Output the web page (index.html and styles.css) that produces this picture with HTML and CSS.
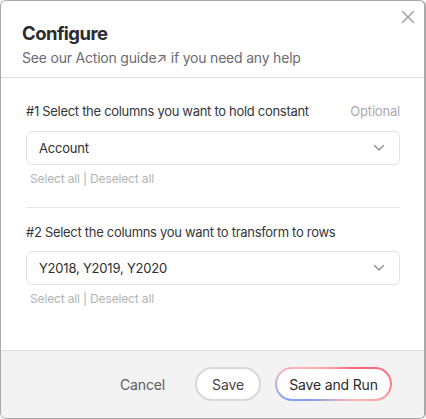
FILE: index.html
```html
<!DOCTYPE html>
<html>
<head>
<meta charset="utf-8">
<link rel="stylesheet" href="styles.css">
</head>
<body>
<div class="dialog">
  <button class="close" aria-label="Close">
    <svg width="14" height="14" viewBox="0 0 14 14"><path d="M1.5 1.5L12.5 12.5M12.5 1.5L1.5 12.5" stroke="#9a9a9e" stroke-width="1.4" stroke-linecap="round"/></svg>
  </button>
  <header class="header">
    <h1 class="title">Configure</h1>
    <p class="subtitle">See our <span class="link">Action guide↗</span> if you need any help</p>
  </header>
  <main class="body">
    <section class="section">
      <div class="label-row">
        <span class="label">#1 Select the columns you want to hold constant</span>
        <span class="optional">Optional</span>
      </div>
      <div class="select">
        <span>Account</span>
        <svg class="chev" width="12" height="8" viewBox="0 0 12 8"><path d="M1.5 1.5L6 6L10.5 1.5" fill="none" stroke="#8e8e93" stroke-width="1.4" stroke-linecap="round" stroke-linejoin="round"/></svg>
      </div>
      <div class="select-links">Select all | Deselect all</div>
    </section>
    <div class="divider"></div>
    <section class="section second">
      <div class="label-row">
        <span class="label">#2 Select the columns you want to transform to rows</span>
      </div>
      <div class="select">
        <span>Y2018, Y2019, Y2020</span>
        <svg class="chev" width="12" height="8" viewBox="0 0 12 8"><path d="M1.5 1.5L6 6L10.5 1.5" fill="none" stroke="#8e8e93" stroke-width="1.4" stroke-linecap="round" stroke-linejoin="round"/></svg>
      </div>
      <div class="select-links">Select all | Deselect all</div>
    </section>
  </main>
  <footer class="footer">
    <button class="btn cancel">Cancel</button>
    <button class="btn save">Save</button>
    <button class="btn run">Save and Run</button>
  </footer>
</div>
</body>
</html>
```

FILE: styles.css
```css
* { box-sizing: border-box; }
html, body { margin: 0; padding: 0; background: #ffffff; }
body { font-family: Inter, "Noto Sans", "Liberation Sans", sans-serif; color: #333; }

.dialog {
  position: relative;
  width: 426px;
  height: 419px;
  border: 1px solid #a9a9a9;
  border-right-width: 2px;
  border-radius: 6px;
  background: #fff;
  display: flex;
  flex-direction: column;
  overflow: hidden;
}

.close {
  position: absolute;
  top: 9px;
  right: 9px;
  width: 14px;
  height: 14px;
  padding: 0;
  border: 0;
  background: none;
  display: flex;
}

.header {
  padding: 19px 22px 9px 21px;
  border-bottom: 1px solid #dcdce0;
}
.title {
  margin: 0;
  font-size: 18.5px;
  line-height: 26px;
  font-weight: 700;
  color: #2b2b30;
  letter-spacing: -0.55px;
}
.subtitle {
  margin: 2px 0 0;
  font-size: 14px;
  line-height: 20px;
  color: #6b6b70;
  letter-spacing: -0.2px;
}

.body {
  flex: 1;
  padding: 24px 24px 0 25px;
}
.label-row {
  display: flex;
  justify-content: space-between;
  align-items: center;
  height: 18px;
}
.label {
  font-size: 13px;
  color: #36363a;
  letter-spacing: -0.3px;
}
.optional {
  font-size: 13px;
  color: #a9a9ad;
  letter-spacing: -0.2px;
}
.select {
  margin-top: 11px;
  height: 34px;
  border: 1px solid #e2e2e6;
  border-radius: 6px;
  display: flex;
  align-items: center;
  justify-content: space-between;
  padding: 0 14px 0 12px;
  font-size: 13px;
  color: #2e2e32;
  letter-spacing: -0.2px;
}
.second .select { margin-top: 10px; }
.chev { display: block; }
.select-links {
  margin-top: 6px;
  padding-left: 4px;
  font-size: 12px;
  line-height: 16px;
  color: #b3b3b7;
  letter-spacing: -0.15px;
}
.divider {
  height: 1px;
  background: #e4e4e8;
  margin: 20px 0 15px;
}

.footer {
  height: 68px;
  background: #f3f3f3;
  border-top: 1px solid #dedee2;
  display: flex;
  align-items: center;
  justify-content: flex-end;
  padding: 0 32px 1px 0;
  gap: 14px;
}
.btn {
  font-family: inherit;
  font-size: 14px;
  height: 34px;
  border-radius: 17px;
  cursor: pointer;
  letter-spacing: -0.15px;
}
.cancel {
  border: 0;
  background: none;
  color: #5a5a60;
  padding: 0 16px;
}
.save {
  width: 66px;
  border: 2px solid #d7d7dc;
  background: #fff;
  color: #46464c;
}
.run {
  width: 117px;
  border: 2px solid transparent;
  color: #2b2b30;
  background:
    linear-gradient(#fff, #fff) padding-box,
    conic-gradient(from 0deg, #ff9aa6 0deg, #ff5e7a 60deg, #ff7b8c 90deg, #ffb5ad 118deg, #d8aac8 180deg, #7d9ff2 242deg, #8fa6ee 258deg, #f2b2bf 282deg, #ffb0b5 300deg, #ff9aa6 360deg) border-box;
}
```
